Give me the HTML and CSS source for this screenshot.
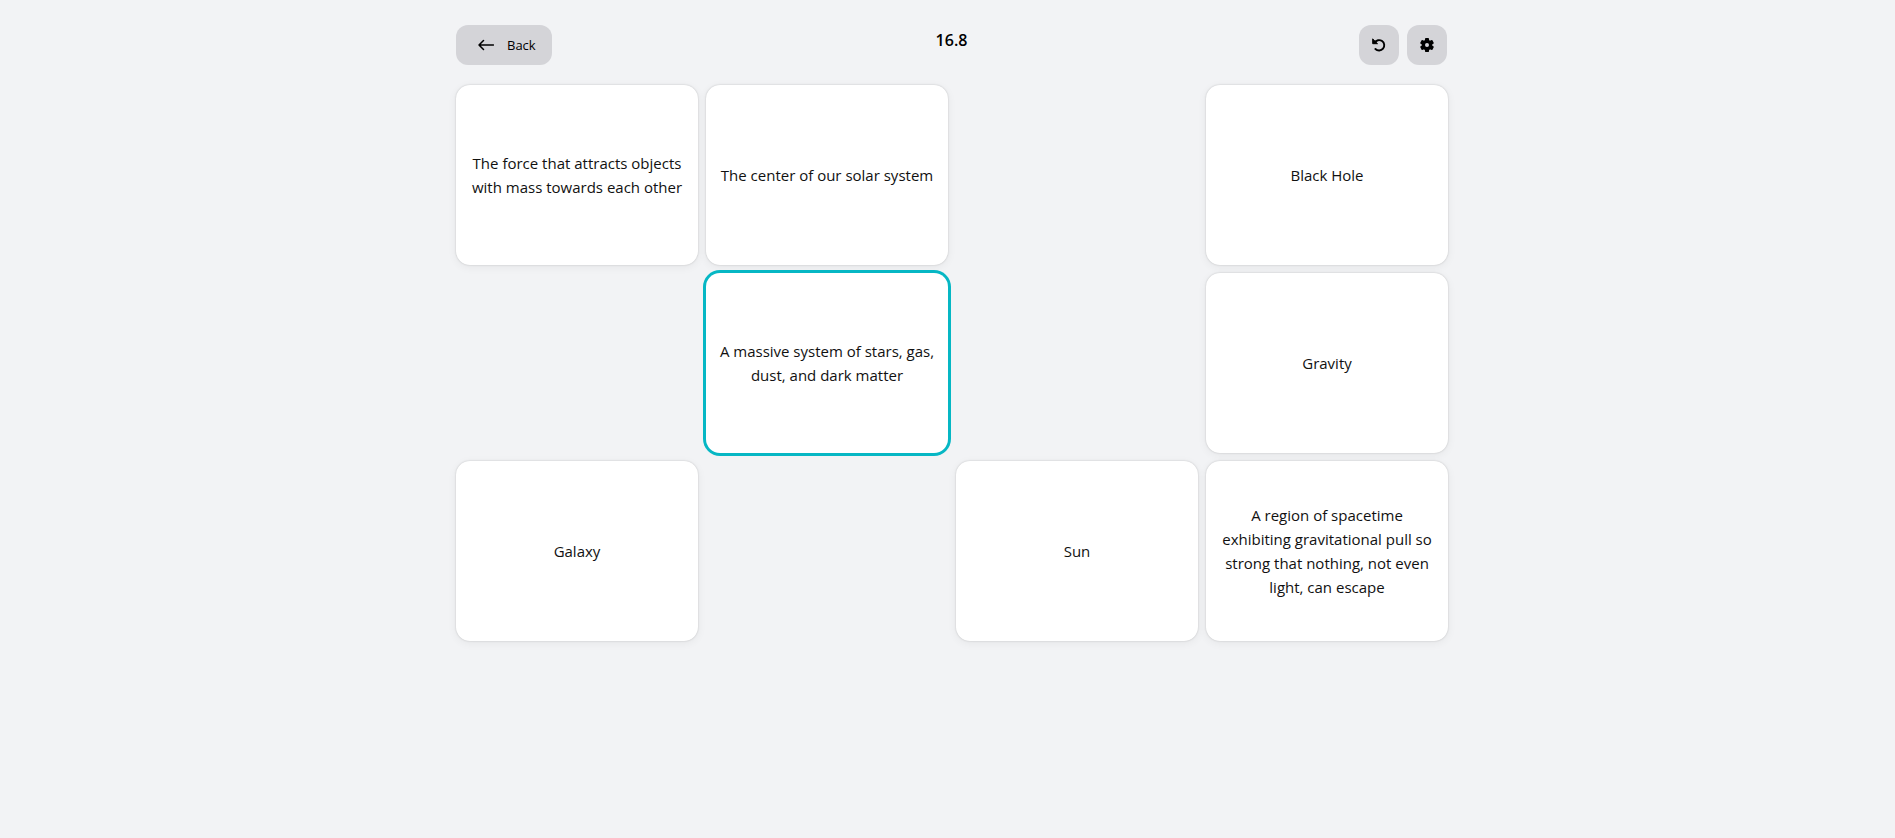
FILE: index.html
```html
<!DOCTYPE html>
<html lang="en">
<head>
<meta charset="utf-8">
<title>Match</title>
<link rel="stylesheet" href="styles.css">
</head>
<body>
<main class="game">
  <header class="toolbar">
    <button class="btn btn-back" type="button">
      <svg class="icon-arrow" viewBox="0 0 16 16" aria-hidden="true"><path d="M15.5 8H1M5.5 3.5L1 8l4.5 4.5" fill="none" stroke="currentColor" stroke-width="1.5" stroke-linecap="round" stroke-linejoin="round"/></svg>
      <span>Back</span>
    </button>
    <div class="timer">16.8</div>
    <div class="actions">
      <button class="btn btn-icon" type="button" aria-label="Restart">
        <svg class="icon" viewBox="0 0 14 14" aria-hidden="true"><path d="M2.6 4.6A5.2 5.2 0 1 1 3.4 11" fill="none" stroke="currentColor" stroke-width="1.9" stroke-linecap="round"/><path d="M.7.9v4.8h4.8z" fill="currentColor" stroke="currentColor" stroke-linejoin="round"/></svg>
      </button>
      <button class="btn btn-icon" type="button" aria-label="Settings">
        <svg class="icon" viewBox="-7 -7 14 14" aria-hidden="true"><circle r="3.6" fill="none" stroke="currentColor" stroke-width="3.2"/><g fill="currentColor"><path id="teeth" d="M-1.3-7h2.6q.5 0 .6.5L2.3-4h-4.6l.4-2.5q.1-.5.6-.5zM-1.3 7h2.6q.5 0 .6-.5L2.3 4h-4.6l.4 2.5q.1.5.6.5z"/><use href="#teeth" transform="rotate(60)"/><use href="#teeth" transform="rotate(120)"/></g></svg>
      </button>
    </div>
  </header>
  <section class="board">
    <button class="card" type="button">The force that attracts objects<br>with mass towards each other</button>
    <button class="card" type="button">The center of our solar system</button>
    <div></div>
    <button class="card" type="button">Black Hole</button>
    <div></div>
    <button class="card card-selected" type="button">A massive system of stars, gas,<br>dust, and dark matter</button>
    <div></div>
    <button class="card" type="button">Gravity</button>
    <button class="card" type="button">Galaxy</button>
    <div></div>
    <button class="card" type="button">Sun</button>
    <button class="card" type="button">A region of spacetime<br>exhibiting gravitational pull so<br>strong that nothing, not even<br>light, can escape</button>
  </section>
</main>
</body>
</html>
```
FILE: styles.css
```css
* { box-sizing: border-box; }
body {
  margin: 0;
  padding: 25px 0 24px 9px;
  background: #f2f3f5;
  color: #111;
  font-family: "Segoe UI", "Open Sans", "Noto Sans", sans-serif;
}
button { font: inherit; color: inherit; border: 0; cursor: pointer; }
.game { max-width: 992px; margin: 0 auto; }
.toolbar {
  display: grid;
  grid-template-columns: 1fr auto 1fr;
  align-items: start;
  margin-bottom: 20px;
  padding-right: 1px;
}
.btn {
  display: flex;
  align-items: center;
  justify-content: center;
  height: 40px;
  border-radius: 12px;
  background: #d4d4d8;
  color: #000;
}
.btn-back {
  justify-self: start;
  gap: 13px;
  padding: 0 16px 0 22px;
  font-size: 13px;
}
.btn-icon { width: 40px; padding: 0; }
.icon-arrow { width: 16px; height: 16px; }
.icon { width: 14px; height: 14px; }
.timer { padding-top: 3px; font-size: 16px; line-height: 24px; font-weight: 600; color: #000; }
.actions { display: flex; justify-self: end; gap: 8px; }
.board {
  display: grid;
  grid-template-columns: repeat(4, minmax(0, 1fr));
  grid-auto-rows: minmax(180px, auto);
  gap: 8px;
}
.card {
  padding: 12px;
  border-radius: 14px;
  background: #fff;
  box-shadow: 0 0 2px rgba(0, 0, 0, .2), 0 2px 10px rgba(0, 0, 0, .06);
  font-size: 15px;
  line-height: 24px;
  text-align: center;
}
.card-selected { box-shadow: 0 0 0 3px #06b7c4; }
```
